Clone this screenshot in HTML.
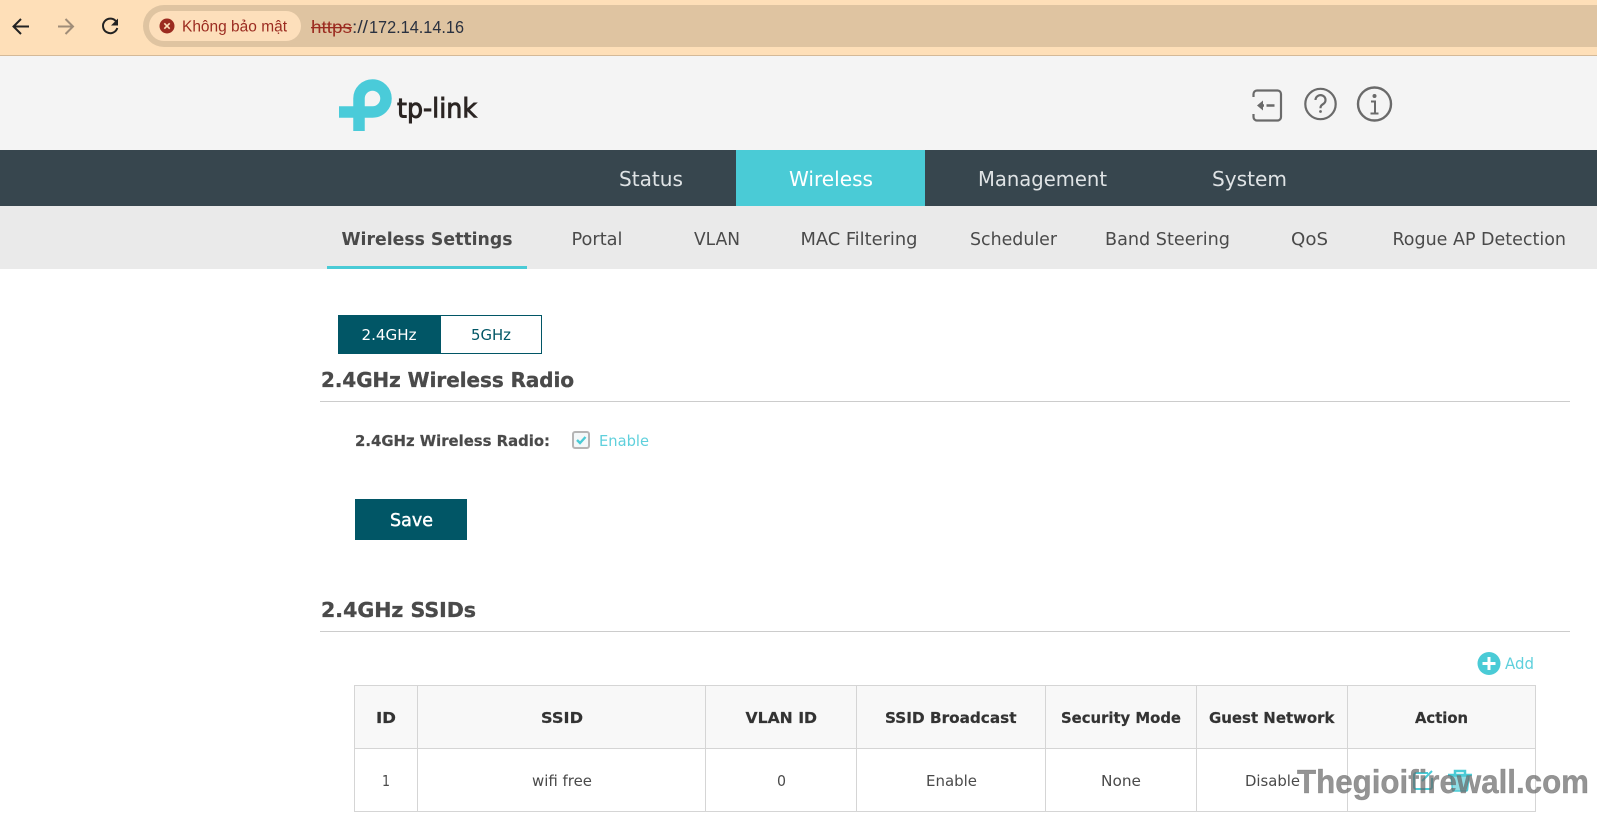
<!DOCTYPE html>
<html lang="vi">
<head>
<meta charset="utf-8">
<title>TP-Link Wireless Settings</title>
<style>
html,body{margin:0;padding:0;background:#fff;width:1597px;height:838px;overflow:hidden}
svg{display:block;position:absolute;left:0;top:0}
text{font-family:"DejaVu Sans","Liberation Sans",sans-serif;white-space:pre}
.nav{font-size:20px;fill:#dfe3e5}
.sub{font-size:18px;fill:#4a4a4a;font-family:"DejaVu Sans Condensed","DejaVu Sans",sans-serif}
.h2{font-size:20px;font-weight:bold;fill:#4a4a4a;stroke:#4a4a4a;stroke-width:.35px}
.th{font-size:15px;font-weight:bold;fill:#333;stroke:#333;stroke-width:.2px}
.td{font-size:15px;fill:#4a4a4a}
.chrome{font-family:"Liberation Sans",sans-serif}
</style>
</head>
<body>
<svg width="1597" height="838" viewBox="0 0 1597 838" xmlns="http://www.w3.org/2000/svg">
<rect width="1597" height="838" fill="#fff"/>
<!-- browser bar -->
<rect width="1597" height="55" fill="#fedfb8"/>
<rect y="55" width="1597" height="1" fill="#d4b998"/>
<path d="M143 26a21 21 0 0 1 21-21H1597V47H164a21 21 0 0 1-21-21z" fill="#dfc4a1"/>
<rect x="149" y="11" width="152" height="30" rx="15" fill="#fddfbb"/>
<path d="M29 26.500H14M21 19l-7.500 7.500L21 34" fill="none" stroke="#222" stroke-width="2"/>
<path d="M73 26.500H58M65.500 19l7.500 7.500L65.500 34" fill="none" stroke="#a08d78" stroke-width="2"/>
<path d="M116.500 22a7.300 7.300 0 1 0 .8 6" fill="none" stroke="#222" stroke-width="2"/>
<path d="M118 18.500v7h-7z" fill="#222"/>
<circle cx="167" cy="26" r="7.500" fill="#9b2b20"/>
<path d="M164.300 23.300l5.400 5.400M169.700 23.300l-5.400 5.400" stroke="#fddfbb" stroke-width="1.600"/>
<text class="chrome" x="182" y="31.500" font-size="15.500" fill="#9b2b20" textLength="105" lengthAdjust="spacingAndGlyphs">Không bảo mật</text>
<text class="chrome" x="311" y="33" font-size="17.500" fill="#9b2b20" textLength="41" lengthAdjust="spacingAndGlyphs">https</text>
<rect x="311" y="27" width="41" height="1.300" fill="#9b2b20"/>
<text class="chrome" x="352" y="33" font-size="17.500" fill="#2a3140" textLength="16" lengthAdjust="spacingAndGlyphs">://</text>
<text class="chrome" x="369" y="33" font-size="17.500" fill="#2a3140" textLength="95" lengthAdjust="spacingAndGlyphs">172.14.14.16</text>
<!-- header -->
<rect y="56" width="1597" height="94" fill="#f4f4f4"/>
<path d="M339 112H372.500A13.500 13.500 0 1 0 359 98.500V131" fill="none" stroke="#4acbd9" stroke-width="11.500"/>
<text x="397" y="117.500" font-size="27" fill="#2b2523" stroke="#2b2523" stroke-width=".9" textLength="80" lengthAdjust="spacingAndGlyphs">tp-link</text>
<path d="M1253.500 97v-3a3.500 3.500 0 0 1 3.500-3.500h20.500a3.500 3.500 0 0 1 3.500 3.500v23a3.500 3.500 0 0 1-3.500 3.500H1257a3.500 3.500 0 0 1-3.500-3.500v-3" fill="none" stroke="#6a6a6a" stroke-width="2.200"/>
<path d="M1261 105.500h3M1266.500 105.500h8" stroke="#6a6a6a" stroke-width="2.600" fill="none"/>
<path d="M1257 105.500l6-5v10z" fill="#6a6a6a"/>
<circle cx="1320.500" cy="104" r="15.200" fill="none" stroke="#6a6a6a" stroke-width="2.200"/>
<path d="M1315.500 100a5 4.800 0 1 1 8 3.800c-2 1.400-3 2-3 4.400" fill="none" stroke="#6a6a6a" stroke-width="2.200"/>
<circle cx="1320.500" cy="111.500" r="1.400" fill="#6a6a6a"/>
<circle cx="1374.500" cy="104" r="16.500" fill="none" stroke="#6a6a6a" stroke-width="2.400"/>
<circle cx="1374.500" cy="96" r="2" fill="#6a6a6a"/>
<path d="M1371 101.500h4v11.500M1370.500 113.500h8" fill="none" stroke="#6a6a6a" stroke-width="2"/>
<!-- main nav -->
<rect y="150" width="1597" height="56" fill="#37464e"/>
<rect x="736" y="150" width="189" height="56" fill="#4acbd6"/>
<text class="nav" x="619" y="186" textLength="64" lengthAdjust="spacingAndGlyphs">Status</text>
<text class="nav" x="789" y="186" fill="#fff" style="fill:#fff" textLength="84" lengthAdjust="spacingAndGlyphs">Wireless</text>
<text class="nav" x="978" y="186" textLength="129" lengthAdjust="spacingAndGlyphs">Management</text>
<text class="nav" x="1212" y="186" textLength="75" lengthAdjust="spacingAndGlyphs">System</text>
<!-- sub nav -->
<rect y="206" width="1597" height="63" fill="#eaeaea"/>
<rect x="327" y="266" width="200" height="3" fill="#4acbd6"/>
<text class="sub" x="341.500" y="245" font-weight="bold" textLength="171" lengthAdjust="spacingAndGlyphs">Wireless Settings</text>
<text class="sub" x="571.500" y="245" textLength="51" lengthAdjust="spacingAndGlyphs">Portal</text>
<text class="sub" x="694" y="245" textLength="46" lengthAdjust="spacingAndGlyphs">VLAN</text>
<text class="sub" x="800.500" y="245" textLength="117" lengthAdjust="spacingAndGlyphs">MAC Filtering</text>
<text class="sub" x="970" y="245" textLength="87" lengthAdjust="spacingAndGlyphs">Scheduler</text>
<text class="sub" x="1105" y="245" textLength="125" lengthAdjust="spacingAndGlyphs">Band Steering</text>
<text class="sub" x="1291" y="245" textLength="37" lengthAdjust="spacingAndGlyphs">QoS</text>
<text class="sub" x="1392.500" y="245" textLength="173.500" lengthAdjust="spacingAndGlyphs">Rogue AP Detection</text>
<!-- tabs -->
<rect x="338.500" y="315.500" width="203" height="38" fill="#fff" stroke="#015666"/>
<rect x="338" y="315" width="103" height="39" fill="#015666"/>
<text x="361.500" y="340" font-size="15" fill="#fff" textLength="55" lengthAdjust="spacingAndGlyphs">2.4GHz</text>
<text x="471" y="340" font-size="15" fill="#015666" textLength="40" lengthAdjust="spacingAndGlyphs">5GHz</text>
<!-- radio section -->
<text class="h2" x="321" y="387" textLength="253" lengthAdjust="spacingAndGlyphs">2.4GHz Wireless Radio</text>
<rect x="320" y="401" width="1250" height="1" fill="#ccc"/>
<text x="355" y="446" font-size="15" font-weight="bold" fill="#4a4a4a" stroke="#4a4a4a" stroke-width=".2" textLength="195" lengthAdjust="spacingAndGlyphs">2.4GHz Wireless Radio:</text>
<rect x="573" y="432" width="16" height="16" rx="2" fill="#f4f8f9" stroke="#b5b5b5" stroke-width="2"/>
<path d="M577 440l3 3 5.500-6" fill="none" stroke="#4acbd6" stroke-width="2.400"/>
<text x="599" y="446" font-size="15" fill="#5fd0dc" textLength="50" lengthAdjust="spacingAndGlyphs">Enable</text>
<rect x="355" y="499" width="112" height="41" fill="#015666"/>
<text x="390" y="526" font-size="18" fill="#fff" stroke="#fff" stroke-width=".45" textLength="43" lengthAdjust="spacingAndGlyphs">Save</text>
<!-- ssid section -->
<text class="h2" x="321" y="617" textLength="155" lengthAdjust="spacingAndGlyphs">2.4GHz SSIDs</text>
<rect x="320" y="631" width="1250" height="1" fill="#ccc"/>
<circle cx="1489" cy="663.500" r="11.500" fill="#4acbd6"/>
<path d="M1489 657v13M1482.500 663.500h13" stroke="#fff" stroke-width="3"/>
<text x="1505" y="669" font-size="16" fill="#5fd0dc" textLength="29" lengthAdjust="spacingAndGlyphs">Add</text>
<!-- table -->
<rect x="354.500" y="685.500" width="1181" height="62.500" fill="#f8f8f8"/>
<g fill="none" stroke="#d5d5d5" stroke-width="1">
<rect x="354.500" y="685.500" width="1181" height="126"/>
<path d="M354.500 748.500H1535.500M417.500 685.500V811.500M705.500 685.500V811.500M856.500 685.500V811.500M1045.500 685.500V811.500M1196.500 685.500V811.500M1347.500 685.500V811.500"/>
</g>
<text class="th" x="376" y="723" textLength="20" lengthAdjust="spacingAndGlyphs">ID</text>
<text class="th" x="541" y="723" textLength="42" lengthAdjust="spacingAndGlyphs">SSID</text>
<text class="th" x="745.500" y="723" textLength="71.500" lengthAdjust="spacingAndGlyphs">VLAN ID</text>
<text class="th" x="885" y="723" textLength="131.500" lengthAdjust="spacingAndGlyphs">SSID Broadcast</text>
<text class="th" x="1061" y="723" textLength="120" lengthAdjust="spacingAndGlyphs">Security Mode</text>
<text class="th" x="1209" y="723" textLength="125.500" lengthAdjust="spacingAndGlyphs">Guest Network</text>
<text class="th" x="1415" y="723" textLength="53" lengthAdjust="spacingAndGlyphs">Action</text>
<text class="td" x="382" y="786" textLength="8" lengthAdjust="spacingAndGlyphs">1</text>
<text class="td" x="532" y="786" textLength="60" lengthAdjust="spacingAndGlyphs">wifi free</text>
<text class="td" x="777" y="786" textLength="9" lengthAdjust="spacingAndGlyphs">0</text>
<text class="td" x="926" y="786" textLength="51" lengthAdjust="spacingAndGlyphs">Enable</text>
<text class="td" x="1101" y="786" textLength="40" lengthAdjust="spacingAndGlyphs">None</text>
<text class="td" x="1245" y="786" textLength="55" lengthAdjust="spacingAndGlyphs">Disable</text>
<!-- action icons -->
<path d="M1428 773h-12a2 2 0 0 0-2 2v12a2 2 0 0 0 2 2h14a2 2 0 0 0 2-2v-9" fill="none" stroke="#4acbd6" stroke-width="2"/>
<path d="M1422 781l10-10" stroke="#4acbd6" stroke-width="2"/>
<path d="M1448 775h24M1455 775v-4h10v4" fill="none" stroke="#4acbd6" stroke-width="2.500"/>
<path d="M1451 776h18l-1.500 14a1.500 1.500 0 0 1-1.500 1h-12a1.500 1.500 0 0 1-1.500-1z" fill="#8fdde5" stroke="#4acbd6" stroke-width="1.500"/>
<!-- watermark -->
<text x="1297" y="793" font-size="33" font-weight="bold" fill="#666" fill-opacity=".7" stroke="#666" stroke-opacity=".5" stroke-width=".5" style="font-family:'Liberation Sans',sans-serif" textLength="292" lengthAdjust="spacingAndGlyphs">Thegioifirewall.com</text>
</svg>
</body>
</html>
